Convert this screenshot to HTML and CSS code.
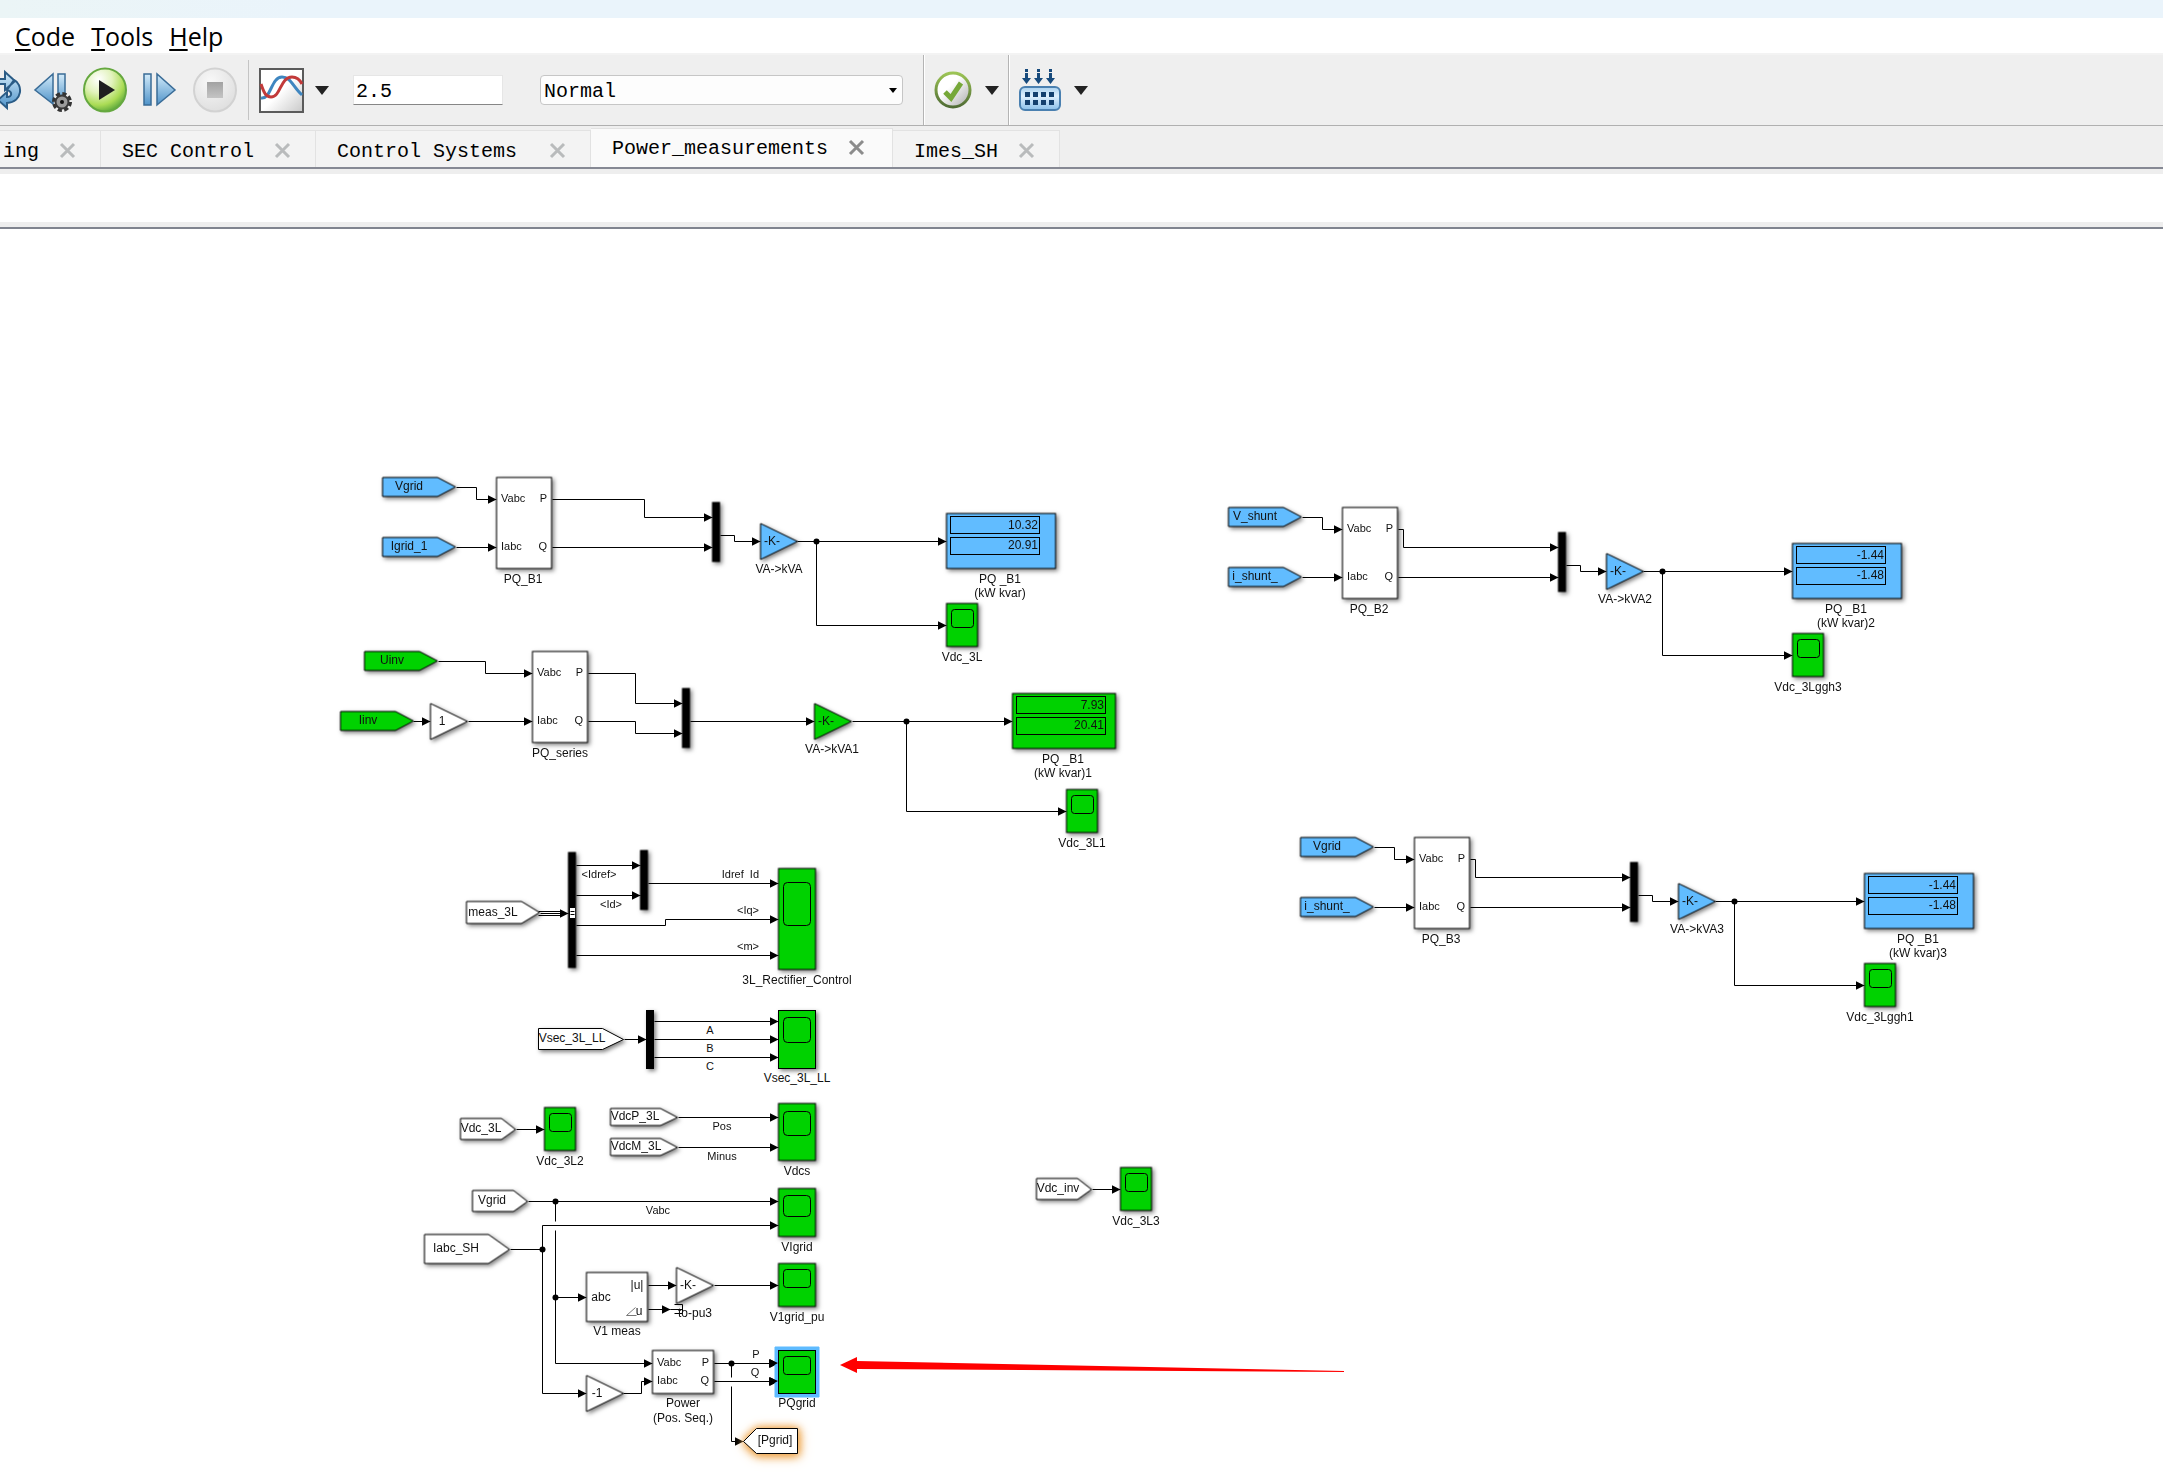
FILE: index.html
```html
<!DOCTYPE html>
<html lang="en">
<head>
<meta charset="utf-8">
<title>Power_measurements</title>
<link rel="stylesheet" href="styles.css">
</head>
<body>
<div class="titlebar"></div>

<nav class="menubar">
  <a href="#code"><u>C</u>ode</a>
  <a href="#tools"><u>T</u>ools</a>
  <a href="#help"><u>H</u>elp</a>
</nav>

<div class="toolbar">
  <div class="group run-group">
    <button class="tool" aria-label="Fast restart">
      <svg width="44" height="44" viewBox="0 0 44 44" overflow="visible">
        <path d="M24 11H32V4L42 13L32 22V16H24M41 12C50 16 50 34 34 35V40L25 32L34 24V29C39 29 40 24 34 22Z" fill="url(#blue-v)" stroke="#2b5c86" stroke-width="2"/>
      </svg>
    </button>
    <button class="tool" aria-label="Step back">
      <svg width="44" height="46" viewBox="0 0 44 46">
        <path d="M25 7V37L7 23Z" fill="url(#blue-v)" stroke="#3a6c97" stroke-width="1.5"/>
        <rect x="30" y="7" width="7" height="30" fill="url(#blue-v)" stroke="#3a6c97" stroke-width="1.5"/>
        <circle cx="34" cy="35" r="8" fill="none" stroke="#333" stroke-width="4" stroke-dasharray="4 2.3"/>
        <circle cx="34" cy="35" r="6.500" fill="#9b9b9b" stroke="#3a3a3a" stroke-width="2"/>
        <circle cx="34" cy="35" r="2" fill="#111"/>
      </svg>
    </button>
    <button class="tool" aria-label="Run">
      <svg width="44" height="46" viewBox="0 0 44 46">
        <ellipse cx="22" cy="23" rx="21" ry="21.500" fill="url(#green-ball)" stroke="#65a83f" stroke-width="2"/>
        <path d="M16 13V33L32 23Z" fill="#1f1f1f"/>
      </svg>
    </button>
    <button class="tool" aria-label="Step forward">
      <svg width="44" height="46" viewBox="0 0 44 46">
        <rect x="6" y="7" width="7" height="31" fill="url(#blue-v)" stroke="#3a6c97" stroke-width="1.5"/>
        <path d="M19 7V38L37 23Z" fill="url(#blue-v)" stroke="#3a6c97" stroke-width="1.5"/>
      </svg>
    </button>
    <button class="tool" aria-label="Stop" disabled>
      <svg width="44" height="46" viewBox="0 0 44 46">
        <ellipse cx="22" cy="23" rx="21" ry="21.500" fill="url(#gray-ball)" stroke="#d2d2d2" stroke-width="2"/>
        <rect x="14" y="15" width="16" height="16" fill="url(#gray-sq)"/>
      </svg>
    </button>
  </div>
  <div class="group scope-group">
    <button class="tool" aria-label="Simulation data inspector">
      <svg width="45" height="46" viewBox="0 0 45 46">
        <rect x="1" y="2" width="43" height="43" fill="url(#paper)" stroke="#5b5b5b" stroke-width="2"/>
        <path d="M2 31C12 33 12 10 23 10C32 10 34 20 43 28" fill="none" stroke="#3f86c0" stroke-width="3"/>
        <path d="M2 17C5 26 7 30 12 30C22 30 21 10 33 10C38 10 41 13 43 17" fill="none" stroke="#c23a3a" stroke-width="3"/>
      </svg>
    </button>
    <button class="drop" aria-label="More scopes"><svg width="14" height="9" viewBox="0 0 14 9"><path d="M0 0H14L7 9Z" fill="#222"/></svg></button>
  </div>
  <input class="stop-time" type="text" value="2.5" aria-label="Stop time">
  <div class="mode">
    <select aria-label="Simulation mode"><option>Normal</option></select>
    <svg class="mode-arrow" width="8" height="5" viewBox="0 0 8 5"><path d="M0 0H8L4 5Z" fill="#000"/></svg>
  </div>
  <div class="group divided">
    <button class="tool" aria-label="Model advisor">
      <svg width="38" height="40" viewBox="0 0 38 40">
        <circle cx="19" cy="20" r="17" fill="url(#silver)" stroke="url(#ring)" stroke-width="3"/>
        <path d="M11 22L17 28L27 13" fill="none" stroke="#76a838" stroke-width="5"/>
      </svg>
    </button>
    <button class="drop" aria-label="More checks"><svg width="14" height="9" viewBox="0 0 14 9"><path d="M0 0H14L7 9Z" fill="#222"/></svg></button>
  </div>
  <div class="group divided">
    <button class="tool" aria-label="Build model">
      <svg width="42" height="42" viewBox="0 0 42 42">
        <g fill="#174a7c">
          <path d="M6 0H9V3H6ZM6 4H9V9H12L7.500 15L3 9H6Z"/>
          <path d="M18 0H21V3H18ZM18 4H21V9H24L19.500 15L15 9H18Z"/>
          <path d="M30 0H33V3H30ZM30 4H33V9H36L31.500 15L27 9H30Z"/>
        </g>
        <rect x="1" y="18" width="40" height="23" rx="5" fill="url(#chip)" stroke="#4a80b0" stroke-width="2"/>
        <g fill="#14406e">
          <rect x="6" y="23" width="5" height="5"/><rect x="14" y="23" width="5" height="5"/><rect x="22" y="23" width="5" height="5"/><rect x="30" y="23" width="5" height="5"/>
          <rect x="6" y="31" width="5" height="5"/><rect x="14" y="31" width="5" height="5"/><rect x="22" y="31" width="5" height="5"/><rect x="30" y="31" width="5" height="5"/>
        </g>
      </svg>
    </button>
    <button class="drop" aria-label="More build options"><svg width="14" height="9" viewBox="0 0 14 9"><path d="M0 0H14L7 9Z" fill="#222"/></svg></button>
  </div>
</div>

<div class="tabs">
  <div class="tab cut"><button class="name">ing</button><button class="close" aria-label="Close"><svg width="17" height="17" viewBox="0 0 17 17"><path d="M2 2L15 15M15 2L2 15"/></svg></button></div>
  <div class="tab"><button class="name">SEC Control</button><button class="close" aria-label="Close"><svg width="17" height="17" viewBox="0 0 17 17"><path d="M2 2L15 15M15 2L2 15"/></svg></button></div>
  <div class="tab wide"><button class="name">Control Systems</button><button class="close" aria-label="Close"><svg width="17" height="17" viewBox="0 0 17 17"><path d="M2 2L15 15M15 2L2 15"/></svg></button></div>
  <div class="tab active"><button class="name">Power_measurements</button><button class="close" aria-label="Close"><svg width="17" height="17" viewBox="0 0 17 17"><path d="M2 2L15 15M15 2L2 15"/></svg></button></div>
  <div class="tab"><button class="name">Imes_SH</button><button class="close" aria-label="Close"><svg width="17" height="17" viewBox="0 0 17 17"><path d="M2 2L15 15M15 2L2 15"/></svg></button></div>
</div>
<div class="pathbar"></div>

<main class="canvas">
<svg class="diagram" viewBox="0 229 2163 1252">
  <defs>
    <linearGradient id="blue-v" x2="0" y2="1"><stop offset="0" stop-color="#d3ebfa"/><stop offset="1" stop-color="#4f93c9"/></linearGradient>
    <linearGradient id="gray-sq" x2="0" y2="1"><stop offset="0" stop-color="#a2a2a2"/><stop offset="1" stop-color="#c4c4c4"/></linearGradient>
    <linearGradient id="ring" x2="0" y2="1"><stop offset="0" stop-color="#9cc455"/><stop offset="1" stop-color="#4f6b34"/></linearGradient>
    <linearGradient id="silver" x2="1" y2="1"><stop offset=".4" stop-color="#fff"/><stop offset="1" stop-color="#a8a8a8"/></linearGradient>
    <linearGradient id="chip" x2="0" y2="1"><stop offset="0" stop-color="#a9d0ee"/><stop offset=".4" stop-color="#dff0fd"/><stop offset="1" stop-color="#8abfea"/></linearGradient>
    <linearGradient id="paper" x2="1" y2="1"><stop offset=".5" stop-color="#fff"/><stop offset="1" stop-color="#c8c8c8"/></linearGradient>
    <radialGradient id="green-ball" cx=".35" cy=".25" r=".8"><stop offset="0" stop-color="#fff"/><stop offset=".4" stop-color="#e2f3bd"/><stop offset=".75" stop-color="#abdc55"/><stop offset="1" stop-color="#58a53a"/></radialGradient>
    <radialGradient id="gray-ball" cx=".4" cy=".3" r=".8"><stop offset="0" stop-color="#f8f8f8"/><stop offset="1" stop-color="#dcdcdc"/></radialGradient>
    <marker id="head" markerWidth="10" markerHeight="10" refX="9" refY="5" orient="auto" markerUnits="userSpaceOnUse"><path d="M0 0.500L9 5L0 9.500Z"/></marker>
    <path id="tag" d="M0 0H55L73 9.500L55 19H0Z"/>
    <path id="tag-s" d="M0 0H41L55 11L41 21H0Z"/>
    <path id="tag-n" d="M0 0H50L67 9L50 17H0Z"/>
    <rect id="pq" width="55" height="91"/>
    <rect id="mux" width="7" height="59"/>
    <path id="gain" d="M0 -18L37 0L0 18Z"/>
    <rect id="display" width="109" height="55"/>
    <g id="rows"><rect x="4" y="3" width="89" height="17"/><rect x="4" y="24" width="89" height="17"/></g>
    <rect id="scope" width="31" height="43"/>
    <rect id="screen" x="5" y="6" width="22" height="18" rx="3"/>
  </defs>

  <!-- PQ_B1 -->
  <g class="wires">
    <path d="M456 487H476V499H496"/><path d="M456 547H496"/>
    <path d="M552 499H644V517H712"/><path d="M552 547H712"/>
    <path d="M720 535H734V541H760"/><path d="M797 541H946"/><path d="M816 541V625H946"/>
  </g>
  <circle class="dot" cx="816" cy="541" r="3"/>
  <g class="shapes">
    <use href="#tag" x="382" y="477" class="blue"/><use href="#tag" x="382" y="537" class="blue"/>
    <use href="#pq" x="496" y="477"/><use href="#mux" x="712" y="502" class="black"/>
    <use href="#gain" x="760" y="541" class="blue"/>
    <use href="#display" x="946" y="513" class="blue"/>
    <use href="#scope" x="946" y="603" class="green"/>
  </g>
  <use href="#rows" x="946" y="513" class="line"/><use href="#screen" x="946" y="603" class="line"/>
  <g class="names">
    <text x="409" y="490">Vgrid</text><text x="409" y="550">Igrid_1</text><text x="523" y="583">PQ_B1</text>
    <text x="772" y="545">-K-</text><text x="779" y="573">VA-&gt;kVA</text>
    <text x="1000" y="583">PQ _B1</text><text x="1000" y="597">(kW kvar)</text><text x="962" y="661">Vdc_3L</text>
  </g>
  <g class="values"><text x="1038" y="529">10.32</text><text x="1038" y="549">20.91</text></g>
  <g class="ports"><text x="501" y="502">Vabc</text><text x="501" y="550">Iabc</text></g>
  <g class="ports out"><text x="547" y="502">P</text><text x="547" y="550">Q</text></g>

  <!-- PQ_series -->
  <g class="wires">
    <path d="M438 661H485V673H532"/><path d="M413 721H430"/><path d="M468 721H532"/>
    <path d="M588 673H635V703H682"/><path d="M588 721H635V733H682"/>
    <path d="M690 721H814"/><path d="M852 721H1012"/><path d="M906 721V811H1066"/>
  </g>
  <circle class="dot" cx="906" cy="721" r="3"/>
  <g class="shapes">
    <use href="#tag" x="364" y="651" class="green"/><use href="#tag" x="340" y="711" class="green"/>
    <use href="#gain" x="430" y="721"/><use href="#pq" x="532" y="651"/>
    <use href="#mux" x="682" y="688" class="black"/><use href="#gain" x="814" y="721" class="green"/>
    <rect x="1012" y="693" width="103" height="55" class="green"/>
    <use href="#scope" x="1066" y="789" class="green"/>
  </g>
  <use href="#rows" x="1012" y="693" class="line"/><use href="#screen" x="1066" y="789" class="line"/>
  <g class="names">
    <text x="392" y="664">Uinv</text><text x="368" y="724">Iinv</text><text x="442" y="725">1</text><text x="560" y="757">PQ_series</text>
    <text x="826" y="725">-K-</text><text x="832" y="753">VA-&gt;kVA1</text>
    <text x="1063" y="763">PQ _B1</text><text x="1063" y="777">(kW kvar)1</text><text x="1082" y="847">Vdc_3L1</text>
  </g>
  <g class="values"><text x="1104" y="709">7.93</text><text x="1104" y="729">20.41</text></g>
  <g class="ports"><text x="537" y="676">Vabc</text><text x="537" y="724">Iabc</text></g>
  <g class="ports out"><text x="583" y="676">P</text><text x="583" y="724">Q</text></g>

  <!-- PQ_B2 -->
  <g>
    <g class="wires">
      <path d="M1302 517H1322V529H1342"/><path d="M1302 577H1342"/>
      <path d="M1398 529H1403V547H1558"/><path d="M1398 577H1558"/>
      <path d="M1566 565H1580V571H1606"/><path d="M1643 571H1792"/><path d="M1662 571V655H1792"/>
    </g>
    <circle class="dot" cx="1662" cy="571" r="3"/>
    <g class="shapes">
      <use href="#tag" x="1228" y="507" class="blue"/><use href="#tag" x="1228" y="567" class="blue"/>
      <use href="#pq" x="1342" y="507"/><use href="#mux" x="1558" y="532" class="black"/>
      <use href="#gain" x="1606" y="571" class="blue"/>
      <use href="#display" x="1792" y="543" class="blue"/><use href="#scope" x="1792" y="633" class="green"/>
    </g>
    <use href="#rows" x="1792" y="543" class="line"/><use href="#screen" x="1792" y="633" class="line"/>
    <g class="names">
      <text x="1255" y="520">V_shunt</text><text x="1255" y="580">i_shunt_</text><text x="1369" y="613">PQ_B2</text>
      <text x="1618" y="575">-K-</text><text x="1625" y="603">VA-&gt;kVA2</text>
      <text x="1846" y="613">PQ _B1</text><text x="1846" y="627">(kW kvar)2</text><text x="1808" y="691">Vdc_3Lggh3</text>
    </g>
    <g class="values"><text x="1884" y="559">-1.44</text><text x="1884" y="579">-1.48</text></g>
    <g class="ports"><text x="1347" y="532">Vabc</text><text x="1347" y="580">Iabc</text></g>
    <g class="ports out"><text x="1393" y="532">P</text><text x="1393" y="580">Q</text></g>
  </g>

  <!-- PQ_B3 -->
  <g transform="translate(72 330)">
    <g class="wires">
      <path d="M1302 517H1322V529H1342"/><path d="M1302 577H1342"/>
      <path d="M1398 529H1403V547H1558"/><path d="M1398 577H1558"/>
      <path d="M1566 565H1580V571H1606"/><path d="M1643 571H1792"/><path d="M1662 571V655H1792"/>
    </g>
    <circle class="dot" cx="1662" cy="571" r="3"/>
    <g class="shapes">
      <use href="#tag" x="1228" y="507" class="blue"/><use href="#tag" x="1228" y="567" class="blue"/>
      <use href="#pq" x="1342" y="507"/><use href="#mux" x="1558" y="532" class="black"/>
      <use href="#gain" x="1606" y="571" class="blue"/>
      <use href="#display" x="1792" y="543" class="blue"/><use href="#scope" x="1792" y="633" class="green"/>
    </g>
    <use href="#rows" x="1792" y="543" class="line"/><use href="#screen" x="1792" y="633" class="line"/>
    <g class="names">
      <text x="1255" y="520">Vgrid</text><text x="1255" y="580">i_shunt_</text><text x="1369" y="613">PQ_B3</text>
      <text x="1618" y="575">-K-</text><text x="1625" y="603">VA-&gt;kVA3</text>
      <text x="1846" y="613">PQ _B1</text><text x="1846" y="627">(kW kvar)3</text><text x="1808" y="691">Vdc_3Lggh1</text>
    </g>
    <g class="values"><text x="1884" y="559">-1.44</text><text x="1884" y="579">-1.48</text></g>
    <g class="ports"><text x="1347" y="532">Vabc</text><text x="1347" y="580">Iabc</text></g>
    <g class="ports out"><text x="1393" y="532">P</text><text x="1393" y="580">Q</text></g>
  </g>

  <!-- rectifier control -->
  <g class="wires">
    <path d="M540 913H568"/><path d="M576 865H640"/><path d="M576 895H640"/><path d="M648 883H778"/>
    <path d="M576 925H665V919H778"/><path d="M576 955H778"/>
  </g>
  <path class="line" d="M538 911H560M538 915H560"/>
  <g class="shapes">
    <path d="M466 901H521L539 912L521 923H466Z"/>
    <rect x="568" y="852" width="7" height="115" class="black"/><use href="#mux" x="640" y="850" class="black"/>
    <rect x="778" y="868" width="37" height="101" class="green"/>
  </g>
  <rect x="570" y="908" width="5" height="10" fill="#fff"/><path class="line" d="M570 911H574M570 914H574"/>
  <rect class="line" x="783" y="882" width="27" height="43" rx="4"/>
  <g class="names"><text x="493" y="916">meas_3L</text><text x="797" y="984">3L_Rectifier_Control</text></g>
  <g class="ports mid"><text x="599" y="878">&lt;Idref&gt;</text><text x="611" y="908">&lt;Id&gt;</text></g>
  <g class="ports out"><text x="759" y="878">Idref&#160; Id</text><text x="759" y="914">&lt;Iq&gt;</text><text x="759" y="950">&lt;m&gt;</text></g>

  <!-- Vsec -->
  <g class="wires"><path d="M624 1039H646"/><path d="M654 1021H778"/><path d="M654 1039H778"/><path d="M654 1057H778"/></g>
  <g class="shapes">
    <path d="M538 1028H602L623 1039L602 1049H538Z"/><rect x="646" y="1010" width="7" height="58" class="black"/>
    <rect x="778" y="1010" width="37" height="58" class="green"/>
  </g>
  <rect class="line" x="783" y="1017" width="27" height="25" rx="4"/>
  <g class="names"><text x="572" y="1042">Vsec_3L_LL</text><text x="797" y="1082">Vsec_3L_LL</text></g>
  <g class="ports mid"><text x="710" y="1034">A</text><text x="710" y="1052">B</text><text x="710" y="1070">C</text></g>

  <!-- DC voltages -->
  <g class="wires"><path d="M516 1129H544"/><path d="M678 1117H778"/><path d="M678 1147H778"/><path d="M1092 1189H1120"/></g>
  <g class="shapes">
    <use href="#tag-s" x="460" y="1118"/><use href="#scope" x="544" y="1107" class="green"/>
    <use href="#tag-n" x="610" y="1108"/><use href="#tag-n" x="610" y="1138"/>
    <rect x="778" y="1103" width="37" height="57" class="green"/>
    <use href="#tag-s" x="1036" y="1178"/><use href="#scope" x="1120" y="1167" class="green"/>
  </g>
  <use href="#screen" x="544" y="1107" class="line"/><use href="#screen" x="1120" y="1167" class="line"/>
  <rect class="line" x="783" y="1111" width="27" height="24" rx="4"/>
  <g class="names">
    <text x="481" y="1132">Vdc_3L</text><text x="560" y="1165">Vdc_3L2</text><text x="635" y="1120">VdcP_3L</text><text x="636" y="1150">VdcM_3L</text>
    <text x="797" y="1175">Vdcs</text><text x="1058" y="1192">Vdc_inv</text><text x="1136" y="1225">Vdc_3L3</text>
  </g>
  <g class="ports mid"><text x="722" y="1130">Pos</text><text x="722" y="1160">Minus</text></g>

  <!-- grid measurements -->
  <g class="wires">
    <path d="M528 1201H778"/><path d="M542 1249V1225H778"/><path d="M542 1249V1393H586"/><path d="M555 1297H586"/>
    <path d="M555 1230V1363H652"/><path d="M648 1285H676"/><path d="M648 1309H670"/><path d="M714 1285H778"/>
    <path d="M623 1393H641V1381H652"/><path d="M714 1363H778"/><path d="M714 1381H778"/><path d="M731 1386V1441H743"/>
  </g>
  <path class="line" d="M555 1201V1221M510 1249H542M731 1363V1377M670 1309H682M674 1304H682V1313H674"/>
  <circle class="dot" cx="555" cy="1201" r="3"/><circle class="dot" cx="542" cy="1249" r="3"/><circle class="dot" cx="555" cy="1297" r="3"/><circle class="dot" cx="731" cy="1363" r="3"/>
  <g class="shapes">
    <use href="#tag-s" x="472" y="1190"/><path d="M424 1234H488L509 1249L488 1263H424Z"/>
    <rect x="778" y="1188" width="37" height="48" class="green"/>
    <rect x="586" y="1272" width="61" height="49"/><use href="#gain" x="676" y="1285"/>
    <rect x="778" y="1263" width="37" height="43" class="green"/>
    <use href="#gain" x="586" y="1393"/><rect x="652" y="1350" width="61" height="43"/>
  </g>
  <path class="selection" fill-rule="evenodd" d="M775 1347H819V1397H775ZM778 1350V1394H816V1350Z"/>
  <rect class="line green" x="778" y="1350" width="37" height="43"/>
  <path class="head" d="M769 1359L778 1363L769 1368ZM769 1377L778 1381L769 1386Z"/>
  <path class="goto" d="M743 1441L756 1428H797V1453H756Z"/>
  <rect class="line" x="783" y="1195" width="27" height="21" rx="4"/>
  <rect class="line" x="783" y="1269" width="27" height="18" rx="3"/>
  <rect class="line" x="783" y="1356" width="27" height="18" rx="3"/>
  <path class="angle" d="M635 1307L626 1315H636"/>
  <g class="names">
    <text x="492" y="1204">Vgrid</text><text x="456" y="1252">Iabc_SH</text><text x="797" y="1251">VIgrid</text>
    <text x="601" y="1301">abc</text><text x="637" y="1289">|u|</text><text x="639" y="1315">u</text><text x="617" y="1335">V1 meas</text>
    <text x="688" y="1289">-K-</text><text x="695" y="1317">to-pu3</text><text x="797" y="1321">V1grid_pu</text>
    <text x="597" y="1397">-1</text><text x="683" y="1407">Power</text><text x="683" y="1422">(Pos. Seq.)</text><text x="797" y="1407">PQgrid</text>
    <text x="775" y="1444">[Pgrid]</text>
  </g>
  <g class="ports"><text x="657" y="1366">Vabc</text><text x="657" y="1384">Iabc</text></g>
  <g class="ports out"><text x="709" y="1366">P</text><text x="709" y="1384">Q</text></g>
  <g class="ports mid"><text x="658" y="1214">Vabc</text><text x="756" y="1358">P</text><text x="755" y="1376">Q</text></g>

  <path d="M840 1365L857 1357V1361L1344 1371V1372L857 1369V1373Z" fill="#f00"/>
</svg>
</main>
</body>
</html>
```
FILE: styles.css
```css
* { box-sizing: border-box; }

body {
  margin: 0;
  background: #fff;
  color: #000;
  overflow-x: hidden;
}

button {
  margin: 0;
  padding: 0;
  border: 0;
  background: none;
  font: inherit;
  color: inherit;
}

svg { display: block; }

.titlebar {
  height: 18px;
  background: linear-gradient(90deg, #ebf5f6, #eaf4fb 300px);
}

.menubar {
  display: flex;
  gap: 16px;
  height: 37px;
  padding-left: 15px;
  border-bottom: 2px solid #f3f3f3;
  font: 25px/36px "Open Sans", sans-serif;
}

.menubar a { color: #000; text-decoration: none; }
.menubar u { text-decoration-thickness: 2px; text-underline-offset: 3px; }

.toolbar {
  display: flex;
  align-items: center;
  height: 71px;
  border-bottom: 1px solid #b0b0b0;
  background: #efefef;
  font: 20px/28px "Liberation Mono", monospace;
}

.group { display: flex; align-items: center; gap: 11px; }
.run-group { margin-left: -27px; padding-right: 11px; }

.scope-group {
  height: 60px;
  padding: 0 24px 0 10px;
  border-left: 1px solid #c4c4c4;
}

.stop-time {
  width: 150px;
  height: 30px;
  margin-right: 37px;
  padding: 2px 2px 0;
  border: 1px solid #e6e6e6;
  border-bottom-color: #868686;
  background: #fff;
  font: inherit;
  color: #000;
}

.mode { position: relative; width: 363px; margin-right: 20px; }

.mode select {
  display: block;
  width: 100%;
  height: 30px;
  padding: 2px 3px 0;
  border: 1px solid #c6c6c6;
  border-radius: 4px;
  background: #fdfdfd;
  font: inherit;
  color: #000;
  appearance: none;
}

.mode-arrow { position: absolute; right: 6px; top: 13px; }

.divided {
  height: 70px;
  gap: 13px;
  padding: 0 9px 0 10px;
  border-left: 1px solid #b4b4b4;
  box-shadow: inset 1px 0 #fff;
}

.tabs {
  display: flex;
  align-items: flex-end;
  height: 43px;
  border-bottom: 2px solid #868994;
  background: #efefef;
  font: 20px/28px "Liberation Mono", monospace;
}

.tab {
  display: flex;
  align-items: center;
  justify-content: space-between;
  gap: 20px;
  height: 37px;
  padding: 2px 24px 0 21px;
  border: 1px solid #e2e2e2;
  border-width: 1px 1px 0 0;
  background: #f3f3f3;
}

.tab.cut { padding-left: 3px; }
.tab.wide { min-width: 275px; }
.tab.active { height: 39px; padding: 0 27px 2px 21px; background: #fafafa; }

.name { padding-top: 4px; }
.close { fill: none; stroke: #b9bbbc; stroke-width: 3; }
.active .close { stroke: #8c8c8c; }

.pathbar {
  height: 60px;
  border-top: 5px solid #eee;
  border-bottom: 2px solid #80848f;
  box-shadow: inset 0 -5px #eee;
}

.canvas { overflow: hidden; }
.diagram { width: 100%; height: auto; font-family: "Liberation Sans", sans-serif; }

/* Odd-width strokes sit on pixel centres so that they stay sharp. */
.wires, .shapes, .line, .dot, .goto, .angle { transform: translate(.5px, .5px); }

.wires { fill: none; stroke: #000; }
.wires path { marker-end: url(#head); }
.line { fill: none; stroke: #000; }
.shapes { fill: #fff; stroke: #000; filter: drop-shadow(2px 2px 2px rgba(0, 0, 0, .5)); }
.blue { fill: #61bcff; }
.green { fill: #00d200; }
.black { fill: #000; }
.selection { fill: #5ebbff; stroke: #5ebbff; }
.goto { fill: #fff; stroke: #000; filter: drop-shadow(0 0 4px #f0a040) drop-shadow(1px 2px 4px #f0b468); }
.angle { fill: none; stroke: #777; }

.names text { font-size: 12px; text-anchor: middle; fill: #111; }
.values text { font-size: 12px; text-anchor: end; fill: #111; }
.ports text { font-size: 11px; fill: #111; }
.ports.out text { text-anchor: end; }
.ports.mid text { text-anchor: middle; }
```
